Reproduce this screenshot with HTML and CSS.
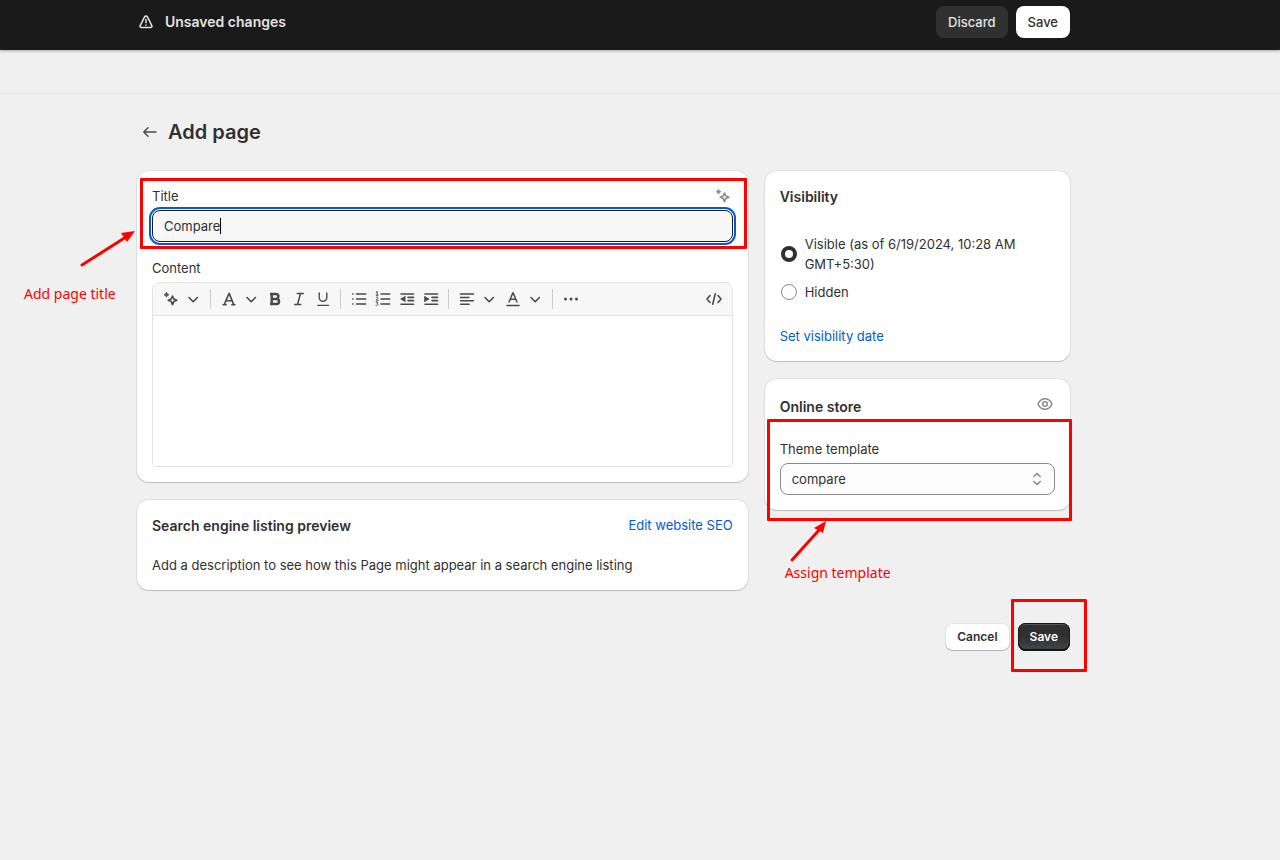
FILE: index.html
```
<!DOCTYPE html>
<html lang="en">
<head>
  <meta charset="UTF-8">
  <meta name="viewport" content="width=device-width, initial-scale=1.0">
  <title>Add page</title>
  <link rel="stylesheet" href="styles.css">
</head>
<body>
  <!-- Icons used more than once -->
  <svg class="sprite" aria-hidden="true">
    <symbol id="chevron" viewBox="0 0 20 20">
      <path d="M6 8.5l4.2 4.2 4.2-4.2" fill="none" stroke="currentColor" stroke-width="1.6" stroke-linecap="round" stroke-linejoin="round"/>
    </symbol>
    <symbol id="magic" viewBox="0 0 20 20">
      <path d="M5.500 3.200l.8 1.700 1.700.8-1.700.8-.8 1.700-.8-1.700-1.700-.8 1.700-.8z" fill="currentColor" stroke="currentColor" stroke-width=".8" stroke-linejoin="round"/>
      <path d="M11.500 7l1.300 3 3 1.300-3 1.300-1.300 3-1.300-3-3-1.300 3-1.300z" fill="none" stroke="currentColor" stroke-width="1.600" stroke-linejoin="round"/>
    </symbol>
  </svg>

  <!-- Save bar -->
  <header class="save-bar">
    <div class="container save-bar-inner">
      <svg class="icon" viewBox="0 0 20 20" fill="none" stroke="currentColor" stroke-width="1.5" stroke-linecap="round" stroke-linejoin="round">
        <path d="M7.600 4.900L3.200 13.600c-.5 1 .1 2 1.200 2h9.200c1.100 0 1.700-1 1.200-2L10.400 4.900c-.6-1.100-2.200-1.100-2.800 0z"/>
        <path d="M9 7.500v3.300M9 13v.2"/>
      </svg>
      <span class="save-bar-text">Unsaved changes</span>
      <button class="bar-button bar-discard" type="button">Discard</button>
      <button class="bar-button bar-save" type="button">Save</button>
    </div>
  </header>
  <div class="sub-bar"></div>

  <main>
    <div class="container">
      <div class="page-title">
        <a href="#" class="back" aria-label="Back">
          <svg class="icon" viewBox="0 0 20 20" fill="none" stroke="currentColor" stroke-width="1.5" stroke-linecap="round" stroke-linejoin="round">
            <path d="M16 10H4M8 5.8L3.8 10 8 14.2"/>
          </svg>
        </a>
        <h1>Add page</h1>
      </div>

      <form class="layout">
        <div class="column column-main">
          <section class="card">
            <div class="field title-field">
              <div class="label-row">
                <label for="title">Title</label>
                <button class="icon-button muted" type="button" aria-label="Generate title"><svg class="icon"><use href="#magic"/></svg></button>
              </div>
              <div class="input-wrap">
                <input type="text" id="title" value="Compare">
                <span class="caret"></span>
              </div>
              <div class="mark mark-title"></div>
              <svg class="arrow arrow-title" viewBox="0 0 56 40">
                <path d="M2 37L46 9" stroke="#f00" stroke-width="3" stroke-linecap="round"/>
                <path d="M55 3L47 14 41 5z" fill="#f00"/>
              </svg>
              <span class="note note-title">Add page title</span>
            </div>

            <div class="field">
              <label for="content">Content</label>
              <div class="editor">
                <div class="toolbar">
                  <button class="tool menu" type="button" aria-label="Magic"><svg class="icon"><use href="#magic"/></svg><svg class="icon"><use href="#chevron"/></svg></button>
                  <span class="divider"></span>
                  <button class="tool menu" type="button" aria-label="Formatting">
                    <svg class="icon" viewBox="0 0 20 20" fill="none" stroke="currentColor" stroke-width="1.6"><path d="M5.3 15.6L9.9 4.6h.4L14.7 15.6M6.8 11.8h6.6"/><path d="M3.5 15.8h4.2M12.2 15.8h4.3" stroke-width="1.5"/></svg><svg class="icon"><use href="#chevron"/></svg>
                  </button>
                  <button class="tool" type="button" aria-label="Bold">
                    <svg class="icon" viewBox="0 0 20 20" fill="none" stroke="currentColor" stroke-width="2.5" stroke-linejoin="round"><path d="M6.7 5h4.2a2.4 2.4 0 010 4.9H6.7zM6.7 9.9h4.8a2.5 2.5 0 010 5H6.7zM5 5h2M5 14.9h2"/></svg>
                  </button>
                  <button class="tool" type="button" aria-label="Italic">
                    <svg class="icon" viewBox="0 0 20 20" fill="none" stroke="currentColor" stroke-width="1.5" stroke-linecap="round"><path d="M8.3 4.5h6M5.7 15.5h6M11.5 4.5l-3 11"/></svg>
                  </button>
                  <button class="tool" type="button" aria-label="Underline">
                    <svg class="icon" viewBox="0 0 20 20" fill="none" stroke="currentColor" stroke-width="1.4" stroke-linecap="round"><path d="M6.2 4v4.500a3.800 3.800 0 007.600 0V4M4.800 16.400h10.600"/></svg>
                  </button>
                  <span class="divider"></span>
                  <button class="tool" type="button" aria-label="Bulleted list">
                    <svg class="icon" viewBox="0 0 20 20" fill="none" stroke="currentColor" stroke-width="1.5" stroke-linecap="round"><path d="M7.5 5h9.2M7.5 10h9.2M7.5 15h9.2M3.7 5h.3M3.7 10h.3M3.7 15h.3"/></svg>
                  </button>
                  <button class="tool" type="button" aria-label="Numbered list">
                    <svg class="icon" viewBox="0 0 20 20" fill="none" stroke="currentColor" stroke-linecap="round"><path d="M8 5h8.7M8 10h8.7M8 15h8.7" stroke-width="1.5"/><path d="M3.2 3.2l1-.7v3.7M3.2 6.2h2M3.2 8.3c1-.8 2.2 0 1.6 1l-1.6 1.900h2M3.2 13h1.800l-1 1.500c1.600 0 1.400 2.300-.9 1.900"/></svg>
                  </button>
                  <button class="tool" type="button" aria-label="Outdent">
                    <svg class="icon" viewBox="0 0 20 20" fill="none" stroke="currentColor" stroke-width="1.6" stroke-linecap="round"><path d="M4 5h12.500M11 8.400h5.500M11 11.600h5.500M4 15.200h12.500"/><path d="M3 10l5.500-3.200v6.400z" fill="currentColor" stroke="none"/></svg>
                  </button>
                  <button class="tool" type="button" aria-label="Indent">
                    <svg class="icon" viewBox="0 0 20 20" fill="none" stroke="currentColor" stroke-width="1.6" stroke-linecap="round"><path d="M4 5h12.500M11 8.400h5.500M11 11.600h5.500M4 15.200h12.500"/><path d="M8.700 10L3.200 6.800v6.400z" fill="currentColor" stroke="none"/></svg>
                  </button>
                  <span class="divider"></span>
                  <button class="tool menu" type="button" aria-label="Alignment">
                    <svg class="icon" viewBox="0 0 20 20" fill="none" stroke="currentColor" stroke-width="1.5" stroke-linecap="round"><path d="M3.5 5h13M3.5 8.4h8.500M3.500 11.700h13M3.500 15.200h8.500"/></svg><svg class="icon"><use href="#chevron"/></svg>
                  </button>
                  <button class="tool menu" type="button" aria-label="Text color">
                    <svg class="icon" viewBox="0 0 20 20" fill="none" stroke="currentColor" stroke-width="1.5" stroke-linecap="round"><path d="M6 13L9.8 4h.4L14 13M7.3 10.2h5.400M4 16.400h12"/></svg><svg class="icon"><use href="#chevron"/></svg>
                  </button>
                  <span class="divider"></span>
                  <button class="tool" type="button" aria-label="More">
                    <svg class="icon" viewBox="0 0 20 20" fill="currentColor"><circle cx="4.5" cy="10" r="1.5"/><circle cx="10" cy="10" r="1.5"/><circle cx="15.5" cy="10" r="1.5"/></svg>
                  </button>
                  <button class="tool tool-code" type="button" aria-label="Show HTML">
                    <svg class="icon" viewBox="0 0 20 20" fill="none" stroke="currentColor" stroke-width="1.6" stroke-linecap="round" stroke-linejoin="round"><path d="M6 6.500L3 10l3 3.500M14 6.500l3 3.500-3 3.500M11.300 4.800L8.700 15.200"/></svg>
                  </button>
                </div>
                <textarea id="content"></textarea>
              </div>
            </div>
          </section>

          <section class="card">
            <div class="card-head">
              <h2>Search engine listing preview</h2>
              <a href="#">Edit website SEO</a>
            </div>
            <p class="seo-text">Add a description to see how this Page might appear in a search engine listing</p>
          </section>
        </div>

        <div class="column column-side">
          <section class="card">
            <h2>Visibility</h2>
            <div class="choices">
              <label class="choice"><input type="radio" name="visibility" checked> <span>Visible (as of 6/19/2024, 10:28 AM GMT+5:30)</span></label>
              <label class="choice"><input type="radio" name="visibility"> <span>Hidden</span></label>
            </div>
            <a class="date-link" href="#">Set visibility date</a>
          </section>

          <section class="card">
            <div class="card-head store-head">
              <h2>Online store</h2>
              <button class="icon-button muted" type="button" aria-label="Preview">
                <svg class="icon" viewBox="0 0 20 20" fill="none" stroke="currentColor" stroke-width="1.5"><path d="M3.400 10.900a1.700 1.700 0 010-1.800C4.800 6.500 7.200 4.800 10 4.800s5.200 1.700 6.600 4.300c.3.600.3 1.200 0 1.800-1.400 2.600-3.800 4.300-6.600 4.300s-5.200-1.700-6.600-4.300z"/><circle cx="10" cy="10" r="2.300"/></svg>
              </button>
            </div>
            <div class="field">
              <label for="template">Theme template</label>
              <div class="input-wrap">
                <select id="template">
                  <option>compare</option>
                </select>
                <svg class="icon select-icon" viewBox="0 0 20 20" fill="none" stroke="currentColor" stroke-width="1.6" stroke-linecap="round" stroke-linejoin="round"><path d="M6.800 7.500L10 4.500l3.200 3M6.800 12.500l3.200 3 3.200-3"/></svg>
              </div>
              <div class="mark mark-template"></div>
              <svg class="arrow arrow-template" viewBox="0 0 40 44">
                <path d="M4 41L32 10" stroke="#f00" stroke-width="3" stroke-linecap="round"/>
                <path d="M38 2L35 14 26 9z" fill="#f00"/>
              </svg>
              <span class="note note-template">Assign template</span>
            </div>
          </section>
        </div>
      </form>

      <div class="actions">
        <button class="button" type="button">Cancel</button>
        <div class="save-wrap">
          <button class="button button-primary" type="button">Save</button>
          <div class="mark mark-save"></div>
        </div>
      </div>
    </div>
  </main>
</body>
</html>
```
FILE: styles.css
```
:root {
  --page-bg: #f0f0f0;
  --text-color: #303030;
  --icon-color: #4a4a4a;
  --muted: #8a8a8a;
  --link: #005bd3;
  --line: #e3e3e3;
  --mark: #ff0000;
}

* {
  box-sizing: border-box;
}

body {
  margin: 0;
  min-height: 100vh;
  font-family: Inter, "Liberation Sans", sans-serif;
  font-size: 13px;
  line-height: 20px;
  color: var(--text-color);
  background-color: var(--page-bg);
}

h1,
h2,
p {
  margin: 0;
}

h1 {
  font-size: 20px;
  line-height: 24px;
  font-weight: 600;
}

h2 {
  font-size: 14px;
  line-height: 22px;
  font-weight: 600;
}

a {
  color: var(--link);
  text-decoration: none;
}

button,
input,
select,
textarea {
  font: inherit;
  color: inherit;
}

button {
  cursor: pointer;
}

.sprite {
  display: none;
}

.icon {
  display: block;
  flex: none;
  width: 20px;
  height: 20px;
}

.container {
  max-width: 933px;
  margin: 0 auto;
}

/* Save bar */
.save-bar {
  position: relative;
  padding: 6px 105px 12px 32px;
  background: #1a1a1a;
  color: #e3e3e3;
  box-shadow: 0 1px 3px rgba(0, 0, 0, 0.3);
}

.save-bar-inner {
  display: flex;
  align-items: center;
  gap: 8px;
}

.save-bar-text {
  flex: 1;
  font-size: 14px;
  line-height: 22px;
  font-weight: 600;
}

.bar-button {
  height: 32px;
  padding: 0 12px;
  border: none;
  border-radius: 8px;
  font-weight: 550;
}

.bar-discard {
  background: #303030;
  color: #e3e3e3;
}

.bar-save {
  background: #fff;
  color: var(--text-color);
}

.sub-bar {
  height: 44px;
  border-bottom: 1px solid #e8e8e8;
}

/* Page */
main {
  padding: 0 105px 64px 32px;
}

.page-title {
  display: flex;
  align-items: center;
  gap: 8px;
  padding: 26px 0 27px 3px;
}

.back {
  color: var(--icon-color);
}

.layout {
  display: flex;
  align-items: flex-start;
  gap: 17px;
}

.column {
  display: flex;
  flex-direction: column;
  gap: 18px;
  min-width: 0;
}

.column-main {
  flex: 2 1 0;
}

.column-side {
  flex: 1 1 0;
}

.card {
  padding: 15px;
  border-radius: 12px;
  background: #fff;
  box-shadow: 0 0 0 1px rgba(0, 0, 0, 0.06), 0 1px 1px rgba(0, 0, 0, 0.16);
}

.card-head,
.label-row {
  display: flex;
  justify-content: space-between;
}

.field {
  position: relative;
  display: flex;
  flex-direction: column;
  gap: 4px;
}

.title-field {
  margin-bottom: 16px;
}

.icon-button {
  padding: 0;
  border: none;
  background: none;
}

.muted {
  color: var(--muted);
}

.input-wrap {
  position: relative;
}

.input-wrap input,
.input-wrap select {
  display: block;
  width: 100%;
  height: 32px;
  padding: 0 11px;
  border: 1px solid var(--muted);
  border-radius: 8px;
  background: #fdfdfd;
}

.input-wrap input {
  border-color: #1a1a1a;
  background: #f7f7f7;
  outline: 2px solid var(--link);
  outline-offset: 1px;
}

.input-wrap select {
  appearance: none;
}

.select-icon {
  position: absolute;
  top: 6px;
  right: 8px;
  color: var(--muted);
  pointer-events: none;
}

.caret {
  position: absolute;
  top: 8px;
  left: 68px;
  width: 1px;
  height: 16px;
  background: #000;
}

/* Editor */
.editor {
  border: 1px solid var(--line);
  border-radius: 8px 8px 4px 4px;
  overflow: hidden;
}

.toolbar {
  display: flex;
  align-items: center;
  gap: 4px;
  height: 33px;
  padding: 0 8px;
  border-bottom: 1px solid var(--line);
  background: #f7f7f7;
  color: var(--icon-color);
}

.tool {
  display: flex;
  padding: 0;
  border: none;
  background: none;
}

.menu {
  gap: 2px;
}

.tool-code {
  margin-left: auto;
}

.divider {
  width: 1px;
  height: 20px;
  margin: 0 4px 0 3px;
  background: #ccc;
}

.editor textarea {
  display: block;
  width: 100%;
  height: 150px;
  padding: 8px;
  border: none;
  outline: none;
  resize: none;
  background: #fff;
}

.seo-text {
  margin-top: 18px;
}

/* Sidebar */
.choices {
  display: flex;
  flex-direction: column;
  gap: 8px;
  margin: 26px 0 24px;
}

.choice {
  display: flex;
  align-items: center;
  gap: 8px;
}

.choice input {
  appearance: none;
  flex: none;
  width: 16px;
  height: 16px;
  margin: 0 0 0 1px;
  border: 1px solid var(--muted);
  border-radius: 50%;
  background: #fdfdfd;
}

.choice input:checked {
  border: 4px solid var(--text-color);
}

.date-link {
  display: block;
}

.store-head {
  align-items: flex-start;
  margin-bottom: 21px;
}

.store-head h2 {
  padding-top: 2px;
}

/* Bottom buttons */
.actions {
  display: flex;
  justify-content: flex-end;
  gap: 8px;
  margin-top: 33px;
}

.button {
  display: block;
  height: 28px;
  padding: 0 12px;
  border: none;
  border-radius: 8px;
  background: #fff;
  font-size: 12px;
  font-weight: 600;
  box-shadow: inset 0 -1px 0 #b5b5b5, inset 0 0 0 1px #e3e3e3;
}

.button-primary {
  background: linear-gradient(#303030 50%, #484848);
  color: #fff;
  box-shadow: inset 0 0 0 1px #1a1a1a, inset 0 -2px 0 #111, inset 0 2px 0 #555;
}

.save-wrap {
  position: relative;
}

/* Red marks and notes lying over the form */
.mark,
.arrow,
.note {
  position: absolute;
  pointer-events: none;
}

.mark {
  border: 3px solid var(--mark);
  border-radius: 1px;
}

.mark-title {
  inset: -8px -14px -7px -12px;
}

.mark-template {
  inset: -20px -17px -26px -13px;
}

.mark-save {
  inset: -24px -17px -21px -7px;
}

.arrow-title {
  top: 42px;
  left: -72px;
  width: 56px;
  height: 40px;
}

.arrow-template {
  top: 80px;
  left: 8px;
  width: 40px;
  height: 44px;
}

.note {
  font-family: "Noto Sans", sans-serif;
  font-size: 14px;
  white-space: nowrap;
  color: var(--mark);
}

.note-title {
  top: 98px;
  left: -128px;
}

.note-template {
  top: 124px;
  left: 5px;
}
```
